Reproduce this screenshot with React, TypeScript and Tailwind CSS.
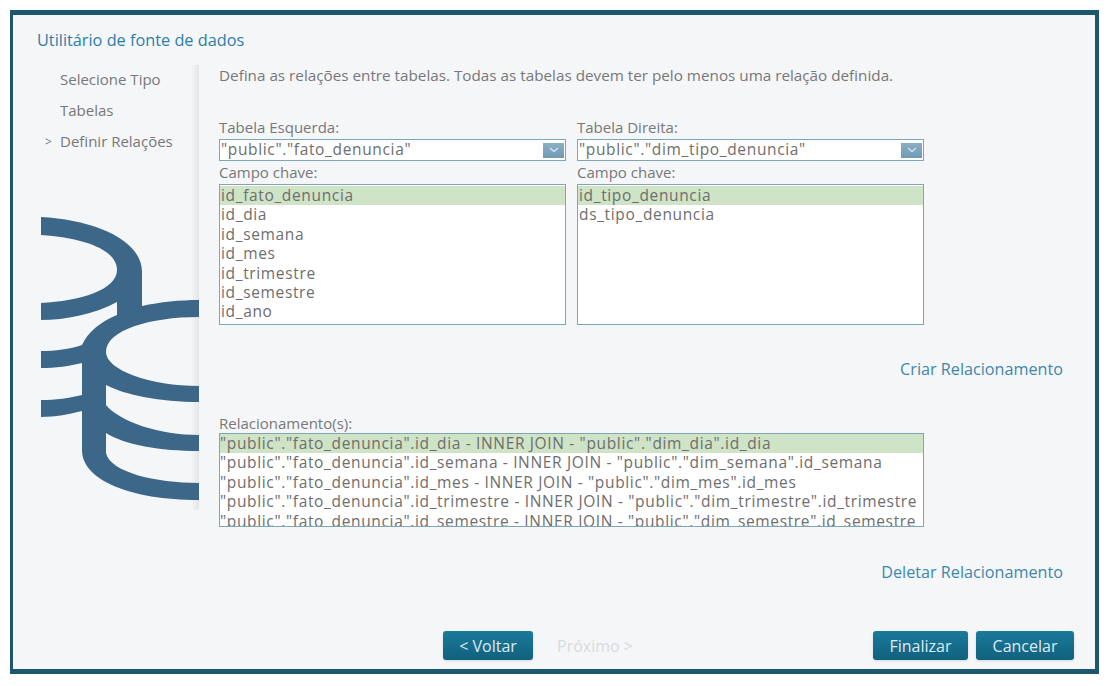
const leftFields = ["id_fato_denuncia", "id_dia", "id_semana", "id_mes", "id_trimestre", "id_semestre", "id_ano"];
const rightFields = ["id_tipo_denuncia", "ds_tipo_denuncia"];
const relations = [
  '"public"."fato_denuncia".id_dia - INNER JOIN - "public"."dim_dia".id_dia',
  '"public"."fato_denuncia".id_semana - INNER JOIN - "public"."dim_semana".id_semana',
  '"public"."fato_denuncia".id_mes - INNER JOIN - "public"."dim_mes".id_mes',
  '"public"."fato_denuncia".id_trimestre - INNER JOIN - "public"."dim_trimestre".id_trimestre',
  '"public"."fato_denuncia".id_semestre - INNER JOIN - "public"."dim_semestre".id_semestre',
];

const Logo = () => (
  <svg width="158" height="285" viewBox="41 216 158 285" className="absolute left-[28px] top-[201px]">
    <path
      fill="#3c6789"
      d="M41 217C95 220 142 240 142 272L142 306C160 302 180 300 199 300L199 317C150 317 106 330 106 352C106 370 150 386 199 386L199 402C160 402 125 395 106 385L106 405C120 422 160 435 199 435L199 451C160 451 125 445 106 433L106 453C110 472 155 483 199 483L199 500C130 500 82 480 82 450L82 411C70 414 55 417 41 417L41 400C55 400 70 398 82 395L82 363C70 366 55 368 41 368L41 351C55 351 70 349 82 345C88 332 100 322 117 315L117 302C95 314 65 320 41 320L41 303C80 301 117 290 117 270C117 250 85 238 41 235Z"
    />
  </svg>
);

const Select = ({ value }: { value: string }) => (
  <div className="flex h-[22px] items-center justify-between border border-[#7fa5b8] bg-white pl-[1px] pr-[1px] text-[15.5px] leading-none tracking-[0.65px] text-[#6e6e6e]">
    <span>{value}</span>
    <span className="flex h-[15px] w-[21px] items-center justify-center bg-gradient-to-b from-[#8aaec4] to-[#6f9ab5]">
      <svg width="10" height="6" viewBox="0 0 10 6" fill="none" stroke="#d5e3ec" strokeWidth="1.5"><path d="M1 1l4 3.5L9 1" /></svg>
    </span>
  </div>
);

const ListBox = ({ items }: { items: string[] }) => (
  <div className="h-[141px] overflow-hidden border border-[#7fa5b8] bg-white pt-[1px] text-[15.5px] leading-[19.4px] tracking-[0.65px] text-[#6e6e6e]">
    {items.map((item, i) => (
      <div key={item} className={i === 0 ? "bg-[#cfe3c6] pl-[1px]" : "pl-[1px]"}>{item}</div>
    ))}
  </div>
);

const Column = ({ title, value, items }: { title: string; value: string; items: string[] }) => (
  <div className="w-[347px]">
    <div className="mb-[2px] h-[20px] text-[15px] leading-[20px] text-[#787878]">{title}</div>
    <Select value={value} />
    <div className="h-[23px] text-[15px] leading-[22px] text-[#787878]">Campo chave:</div>
    <ListBox items={items} />
  </div>
);

const Button = ({ label, width }: { label: string; width: string }) => (
  <button className={`h-[29px] ${width} rounded-[3px] bg-gradient-to-b from-[#1b7a9a] to-[#11617f] text-[16px] leading-none text-[#dfeaf0] shadow-sm`}>{label}</button>
);

export default function App() {
  return (
    <div className="h-[686px] w-[1110px] bg-white pb-[12px] pl-[10px] pr-[11px] pt-[10px] font-['Open_Sans',sans-serif]">
      <div className="relative flex h-full flex-col overflow-hidden border-b-[5px] border-l-[3px] border-r-[4px] border-t-[5px] border-[#1d566f] bg-[#f4f6f8]">
        {/* sidebar edge shadow */}
        <div className="absolute left-[178px] top-[50px] h-[445px] w-[8px] bg-gradient-to-r from-transparent to-[#e2e5e9]" />
        <Logo />
        <h1 className="pl-[24px] pt-[14px] text-[16.3px] leading-[22px] text-[#2f7ea8]">Utilitário de fonte de dados</h1>
        <div className="relative flex flex-1">
          <aside className="w-[186px] shrink-0 pt-[13px] text-[15px] text-[#787878]">
            <div className="flex h-[31px] items-center pl-[47px]">Selecione Tipo</div>
            <div className="flex h-[31px] items-center pl-[47px]">Tabelas</div>
            <div className="flex h-[31px] items-center pl-[32px]">
              <span className="w-[15px] text-[12px]">&gt;</span>Definir Relações
            </div>
          </aside>
          <main className="flex flex-1 flex-col pl-[20px] pr-[32px]">
            <p className="mt-[14px] h-[20px] whitespace-nowrap text-[15.25px] leading-[20px] text-[#787878]">
              Defina as relações entre tabelas. Todas as tabelas devem ter pelo menos uma relação definida.
            </p>
            <div className="mt-[32px] flex gap-[11px]">
              <Column title="Tabela Esquerda:" value={'"public"."fato_denuncia"'} items={leftFields} />
              <Column title="Tabela Direita:" value={'"public"."dim_tipo_denuncia"'} items={rightFields} />
            </div>
            <div className="mt-[34px] h-[20px] text-right text-[16.2px] leading-[20px] text-[#3f87ab]">Criar Relacionamento</div>
            <div className="mt-[34px] h-[20px] text-[15px] leading-[20px] text-[#787878]">Relacionamento(s):</div>
            <div className="h-[94px] w-[705px] overflow-hidden border border-[#7fa5b8] bg-white text-[15.5px] leading-[19.4px] tracking-[0.65px] text-[#6e6e6e]">
              {relations.map((r, i) => (
                <div key={r} className={i === 0 ? "whitespace-nowrap bg-[#cfe3c6]" : "whitespace-nowrap"}>{r}</div>
              ))}
            </div>
            <div className="mt-[35px] h-[20px] text-right text-[16.2px] leading-[20px] text-[#3f87ab]">Deletar Relacionamento</div>
          </main>
        </div>
        <div className="flex items-center pb-[9px] pl-[430px] pr-[21px]">
          <Button label="< Voltar" width="w-[90px]" />
          <span className="ml-[24px] text-[16px] leading-none text-[#d8dbde]">Próximo &gt;</span>
          <div className="ml-auto flex gap-[8px]">
            <Button label="Finalizar" width="w-[95px]" />
            <Button label="Cancelar" width="w-[98px]" />
          </div>
        </div>
      </div>
    </div>
  );
}
